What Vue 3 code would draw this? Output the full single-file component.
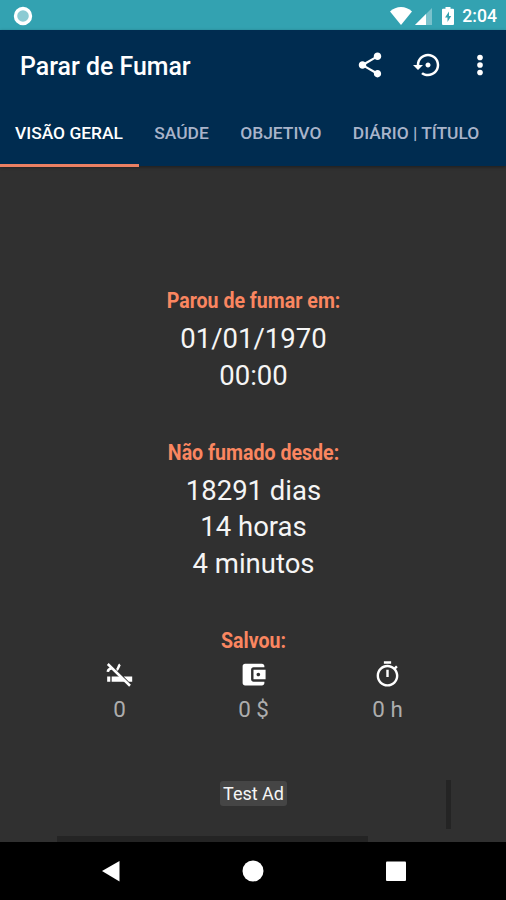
<script setup>
import { ref } from 'vue';

const tabs = ['VISÃO GERAL', 'SAÚDE', 'OBJETIVO', 'DIÁRIO | TÍTULO'];
const activeTab = ref(0);

const sections = [
  { title: 'Parou de fumar em:', lines: ['01/01/1970', '00:00'] },
  { title: 'Não fumado desde:', lines: ['18291 dias', '14 horas', '4 minutos'] },
];

// The smoke-free icon is drawn in the template, it needs strokes
const savings = [
  { value: '0' },
  {
    value: '0 $',
    icon: 'M21 18v1c0 1.100-.9 2-2 2H5c-1.110 0-2-.9-2-2V5c0-1.100.89-2 2-2h14c1.100 0 2 .9 2 2v1h-9c-1.110 0-2 .9-2 2v8c0 1.100.89 2 2 2h9zm-9-2h10V8H12v8zm4-2.500c-.83 0-1.500-.67-1.500-1.500s.67-1.500 1.500-1.500 1.500.67 1.500 1.500-.67 1.500-1.500 1.500z',
  },
  {
    value: '0 h',
    icon: 'M15 1H9v2h6V1zm-4 13h2V8h-2v6zm8.030-6.610l1.420-1.420c-.43-.51-.9-.99-1.410-1.410l-1.420 1.420C16.070 4.740 14.120 4 12 4c-4.970 0-9 4.030-9 9s4.020 9 9 9 9-4.030 9-9c0-2.120-.74-4.070-1.970-5.610zM12 20c-3.870 0-7-3.130-7-7s3.130-7 7-7 7 3.130 7 7-3.130 7-7 7z',
  },
];
</script>

<template>
  <div class="screen">
    <div class="status-bar">
      <svg class="sync" viewBox="0 0 20 20">
        <circle cx="10" cy="10" r="7.500" fill="#8ccbd3" stroke="#fff" stroke-width="3.400" />
      </svg>
      <div class="status-right">
        <svg class="wifi" viewBox="0 0 22 18">
          <path d="M11 18L0 4.500C3 1.600 7 0 11 0s8 1.600 11 4.500z" fill="#fff" />
        </svg>
        <svg class="signal" viewBox="0 0 17 17">
          <path d="M17 0v17H0z" fill="#fff" opacity=".35" />
          <path d="M11 6v11H0z" fill="#fff" />
        </svg>
        <svg class="battery" viewBox="0 0 12 18">
          <path d="M3.500 0h5v1.800H11a1 1 0 0 1 1 1V17a1 1 0 0 1-1 1H1a1 1 0 0 1-1-1V2.800a1 1 0 0 1 1-1h2.500z" fill="#fff" />
          <path d="M7 4.500L3 10.500h2.500v4.500l3.700-6H7z" fill="#33a2b1" />
        </svg>
        <span class="clock">2:04</span>
      </div>
    </div>

    <header class="header">
      <div class="app-bar">
        <h1 class="title">Parar de Fumar</h1>
        <svg class="action" viewBox="0 0 24 24">
          <path d="M18 16.080c-.76 0-1.440.3-1.960.77L8.910 12.700c.05-.23.09-.46.09-.7s-.04-.47-.09-.7l7.050-4.110c.54.5 1.250.81 2.040.81 1.660 0 3-1.340 3-3s-1.340-3-3-3-3 1.340-3 3c0 .24.04.47.09.7L8.040 9.810C7.500 9.310 6.790 9 6 9c-1.660 0-3 1.340-3 3s1.340 3 3 3c.79 0 1.500-.31 2.040-.81l7.120 4.160c-.05.21-.08.43-.08.65 0 1.610 1.310 2.920 2.920 2.920s2.920-1.310 2.920-2.920-1.310-2.920-2.920-2.920z" />
        </svg>
        <svg class="action" viewBox="0 0 24 24">
          <path d="M14 12c0-1.100-.9-2-2-2s-2 .9-2 2 .9 2 2 2 2-.9 2-2zm-2-9c-4.970 0-9 4.030-9 9H0l4 4 4-4H5c0-3.870 3.130-7 7-7s7 3.130 7 7-3.130 7-7 7c-1.510 0-2.910-.49-4.060-1.300l-1.420 1.440C8.040 20.300 9.940 21 12 21c4.970 0 9-4.030 9-9s-4.030-9-9-9z" />
        </svg>
        <svg class="action more" viewBox="0 0 24 24">
          <circle cx="12" cy="6" r="2.250" />
          <circle cx="12" cy="12" r="2.250" />
          <circle cx="12" cy="18" r="2.250" />
        </svg>
      </div>
      <nav class="tabs">
        <button
          v-for="(tab, index) in tabs"
          :key="tab"
          class="tab"
          :class="{ active: activeTab === index }"
          @click="activeTab = index"
        >
          {{ tab }}
        </button>
      </nav>
    </header>

    <main class="content">
      <section v-for="section in sections" :key="section.title" class="section">
        <h2 class="heading">{{ section.title }}</h2>
        <p v-for="line in section.lines" :key="line" class="line">{{ line }}</p>
      </section>

      <section class="section last">
        <h2 class="heading">Salvou:</h2>
        <div class="savings">
          <div v-for="item in savings" :key="item.value" class="saving">
            <svg class="saving-icon" viewBox="0 0 24 24">
              <path v-if="item.icon" :d="item.icon" />
              <g v-else>
                <path d="M1.800 13.700h2.600v4.300H1.800zM5.500 13.700h6.800l4.500 4.300H5.500zM15.500 13.700h7v4.300h-2.700z" />
                <path d="M2.300 3.300L20.700 21.300M2.300 9.800c.2-1.800 1.300-2.600 3.600-2.900M9.600 8c1.800-.5 1.300-3.100 2.800-4.200" fill="none" stroke="#fff" stroke-width="2.100" />
              </g>
            </svg>
            <span class="saving-value">{{ item.value }}</span>
          </div>
        </div>
      </section>

      <div class="ad"><span class="ad-label">Test Ad</span></div>
      <div class="ad-side"></div>
      <div class="ad-bottom"></div>
    </main>

    <footer class="nav-bar">
      <svg viewBox="0 0 24 24"><path d="M3 12L20.500 2v20.500z" /></svg>
      <svg viewBox="0 0 24 24"><circle cx="12" cy="12" r="10.500" /></svg>
      <svg viewBox="0 0 24 24"><rect x="2" y="2.500" width="20" height="19.500" rx="1" /></svg>
    </footer>
  </div>
</template>

<style>
body {
  margin: 0;
  background: #303030;
}
</style>

<style scoped>
.screen {
  display: flex;
  flex-direction: column;
  width: 506px;
  height: 900px;
  overflow: hidden;
  background: #303030;
  color: #fff;
  font-family: Roboto, sans-serif;
}

svg {
  display: block;
  fill: #fff;
}

.status-bar {
  display: flex;
  align-items: center;
  justify-content: space-between;
  box-sizing: border-box;
  height: 30px;
  padding: 1px 9px 0 13px;
  background: #33a2b1;
}

.sync {
  width: 20px;
  height: 20px;
}

.status-right {
  display: flex;
  align-items: center;
}

.wifi {
  width: 22px;
  height: 18px;
}

.signal {
  width: 17px;
  height: 17px;
  margin: 1px 10px 0 3px;
}

.battery {
  width: 12px;
  height: 18px;
  margin-right: 8px;
}

.clock {
  font-size: 17.6px;
  font-weight: 500;
  line-height: 28px;
}

.header {
  height: 136px;
  background: #002c50;
  box-shadow: 0 1px 3px rgba(0, 0, 0, 0.4);
}

.app-bar {
  display: flex;
  align-items: center;
  height: 69px;
  padding-left: 20px;
}

.title {
  flex: 1;
  margin: 4px 0 0;
  font-size: 24.9px;
  font-weight: 500;
}

.action {
  width: 30px;
  height: 30px;
  margin-right: 28px;
}

.action.more {
  margin: 0 11px 0 -6px;
}

.tabs {
  display: flex;
  height: 68px;
}

.tab {
  padding: 2px 15.7px 0;
  border: 0;
  border-bottom: 3px solid transparent;
  background: none;
  color: #a9b4ca;
  font-family: inherit;
  font-size: 17.4px;
  font-weight: 500;
  white-space: nowrap;
}

.tab.active {
  padding-left: 15px;
  border-color: #ea8063;
  color: #fff;
}

.content {
  position: relative;
  flex: 1;
  padding: 120px 0 0 1px;
  text-align: center;
}

.section {
  margin-bottom: 43px;
}

.section.last {
  margin-bottom: 57px;
}

.heading {
  margin: 0;
  height: 35px;
  color: #fa8660;
  font-size: 22px;
  font-weight: 700;
  line-height: 30px;
  transform: scaleX(0.89);
}

.line {
  margin: 0;
  color: #f5f5f5;
  font-size: 27.5px;
  line-height: 36.8px;
}

.savings {
  display: grid;
  grid-template-columns: repeat(3, 134px);
  justify-content: center;
}

.saving {
  display: flex;
  flex-direction: column;
  align-items: center;
}

.saving-icon {
  width: 29px;
  height: 29px;
  margin-top: -1px;
}

.saving-value {
  margin-top: 5px;
  color: #adadad;
  font-size: 22.4px;
  line-height: 30px;
}

.ad {
  display: flex;
  justify-content: center;
}

.ad-label {
  padding: 0 3px;
  border-radius: 3px;
  background: #454545;
  color: #f5f5f5;
  font-size: 18px;
  line-height: 25px;
}

.ad-side {
  position: absolute;
  right: 55px;
  bottom: 13px;
  width: 5px;
  height: 49px;
  background: #242424;
}

.ad-bottom {
  position: absolute;
  left: 57px;
  bottom: 0;
  width: 311px;
  height: 6px;
  background: #242424;
}

.nav-bar {
  display: flex;
  align-items: center;
  justify-content: center;
  gap: 118.500px;
  height: 58px;
  background: #000;
}

.nav-bar svg {
  width: 24px;
  height: 24px;
}
</style>
